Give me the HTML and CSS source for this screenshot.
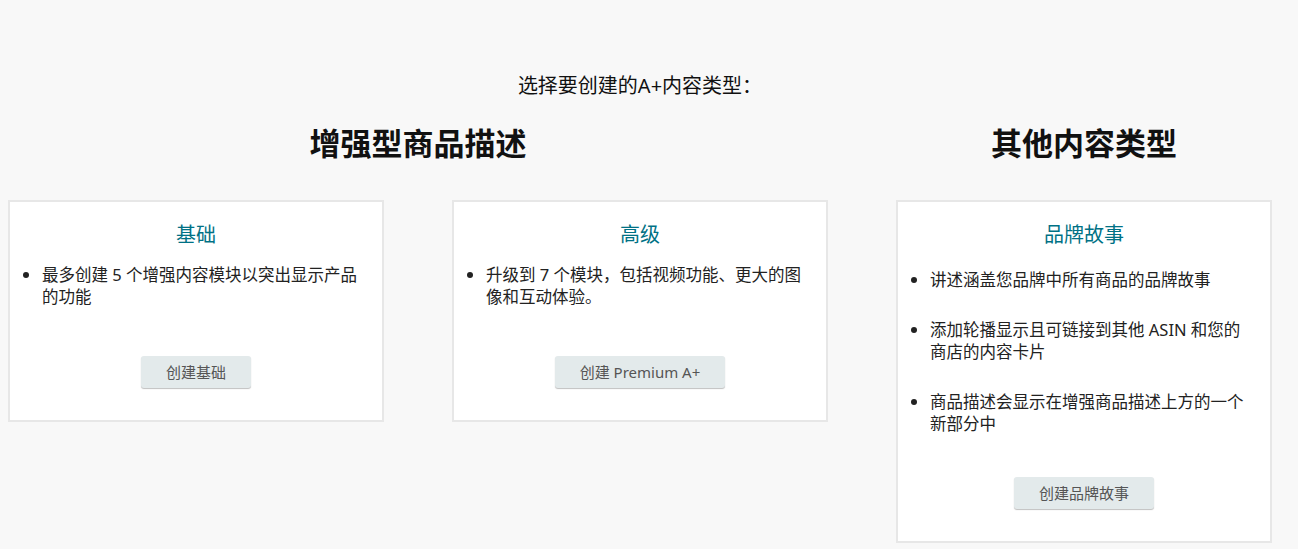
FILE: index.html
```html
<!DOCTYPE html>
<html lang="zh-CN">
<head>
    <meta charset="UTF-8">
    <meta name="viewport" content="width=device-width, initial-scale=1.0">
    <link rel="stylesheet" href="styles.css">
    <title>A+ 内容类型</title>
</head>
<body>

    <div class="pagina">
        <p class="subtitulo">选择要创建的A+内容类型：</p>

        <div class="secciones">
            <!-- Contenido de marca mejorado -->
            <div class="grupo grupo-ancho">
                <h2 class="titulo-grupo">增强型商品描述</h2>
                <div class="fila">
                    <div class="tarjeta">
                        <h3 class="titulo-tarjeta">基础</h3>
                        <ul class="lista">
                            <li>最多创建 5 个增强内容模块以突出显示产品的功能</li>
                        </ul>
                        <div class="acciones">
                            <button class="boton">创建基础</button>
                        </div>
                    </div>
                    <div class="tarjeta">
                        <h3 class="titulo-tarjeta">高级</h3>
                        <ul class="lista">
                            <li>升级到 7 个模块，包括视频功能、更大的图像和互动体验。</li>
                        </ul>
                        <div class="acciones">
                            <button class="boton">创建 Premium A+</button>
                        </div>
                    </div>
                </div>
            </div>

            <!-- Otros tipos -->
            <div class="grupo">
                <h2 class="titulo-grupo">其他内容类型</h2>
                <div class="tarjeta">
                    <h3 class="titulo-tarjeta">品牌故事</h3>
                    <ul class="lista lista-marca">
                        <li>讲述涵盖您品牌中所有商品的品牌故事</li>
                        <li>添加轮播显示且可链接到其他 ASIN 和您的商店的内容卡片</li>
                        <li>商品描述会显示在增强商品描述上方的一个新部分中</li>
                    </ul>
                    <div class="acciones">
                        <button class="boton">创建品牌故事</button>
                    </div>
                </div>
            </div>
        </div>
    </div>

</body>
</html>
```

FILE: styles.css
```css
body {
    margin: 0;
    background-color: #f8f8f8;
    color: #0f1111;
    font-family: "Noto Sans", "Noto Sans CJK SC", sans-serif;
}

.pagina {
    padding: 72px 0 0 8px;
    width: 1264px;
}

.subtitulo {
    margin: 0;
    text-align: center;
    font-size: 20px;
    line-height: 28px;
    color: #111;
}

.secciones {
    display: flex;
    gap: 68px;
    align-items: flex-start;
    margin-top: 23px;
}

.grupo {
    width: 376px;
}

.grupo-ancho {
    width: 820px;
}

.titulo-grupo {
    margin: 0 0 37px 0;
    text-align: center;
    font-size: 31px;
    line-height: 40px;
    font-weight: bold;
    color: #111;
}

.fila {
    display: flex;
    gap: 68px;
    align-items: flex-start;
}

.tarjeta {
    width: 376px;
    box-sizing: border-box;
    background-color: #ffffff;
    border: 2px solid #e7e7e7;
    padding: 19px 18px 32px 18px;
}

.titulo-tarjeta {
    margin: 0;
    text-align: center;
    font-size: 20px;
    line-height: 28px;
    font-weight: normal;
    color: #007185;
}

.lista {
    margin: 15px 0 48px 0;
    padding-left: 14px;
    display: flex;
    flex-direction: column;
    gap: 28px;
}

.lista li {
    font-size: 16.5px;
    line-height: 22px;
    color: #222;
}

.lista-marca {
    margin-top: 20px;
    margin-bottom: 42px;
}

.acciones {
    display: flex;
    justify-content: center;
}

.boton {
    background-color: #e3eaeb;
    color: #555;
    font-family: "Noto Sans", "Noto Sans CJK SC", sans-serif;
    font-size: 15px;
    line-height: 22px;
    padding: 5px 25px;
    border: none;
    border-radius: 3px;
    box-shadow: 0 1px 1px rgba(0, 0, 0, 0.25);
    cursor: pointer;
}

.boton:hover {
    background-color: #d8e1e2;
}
```
